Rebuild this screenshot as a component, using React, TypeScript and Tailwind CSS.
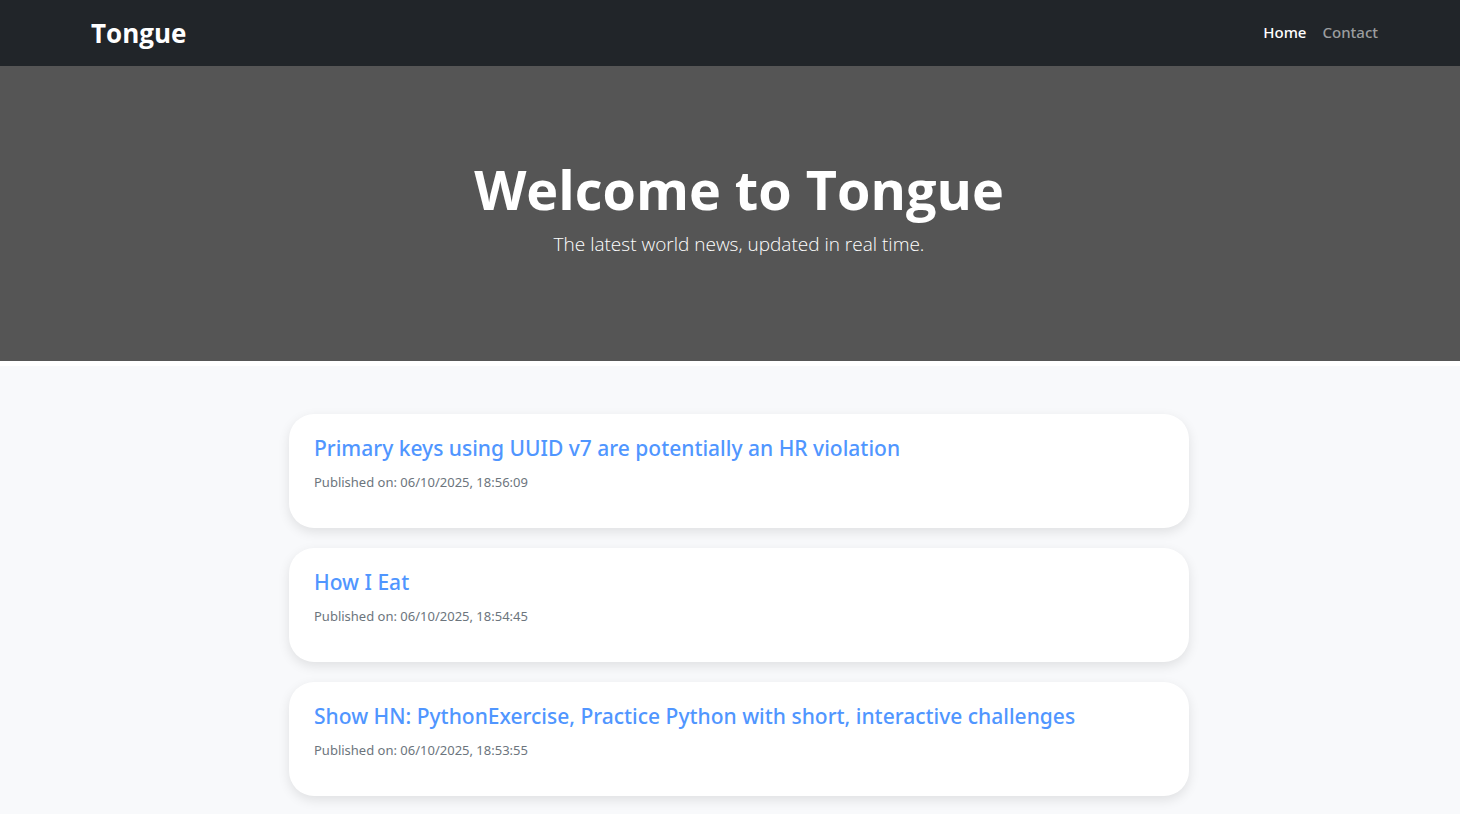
const articles = [
  { title: "Primary keys using UUID v7 are potentially an HR violation", date: "06/10/2025, 18:56:09" },
  { title: "How I Eat", date: "06/10/2025, 18:54:45" },
  { title: "Show HN: PythonExercise, Practice Python with short, interactive challenges", date: "06/10/2025, 18:53:55" },
];

export default function App() {
  return (
    <div className="min-h-screen bg-[#f8f9fb] font-['Segoe_UI','Open_Sans','Noto_Sans',sans-serif] text-[#212529]">
      <nav className="bg-[#212529]">
        <div className="mx-auto flex h-[66px] max-w-[1320px] items-center justify-between pr-3 pl-[21px]">
          <a href="#" className="text-[26px] font-bold text-white">Tongue</a>
          <div className="flex gap-4 pb-0.5 font-['Segoe_UI','Noto_Sans',sans-serif] text-[15px]">
            <a href="#" aria-current="page" className="font-medium text-white">Home</a>
            <a href="#contact" className="font-medium text-[#9b9d9f]">Contact</a>
          </div>
        </div>
      </nav>
      <header className="border-b-[5px] border-white bg-[#555555] pt-[90px] pb-[103px] pl-[18px] text-center text-white">
        <h1 className="text-[54px] leading-[66px] font-bold">Welcome to Tongue</h1>
        <p className="mt-2 text-[19px] leading-7 font-light">The latest world news, updated in real time.</p>
      </header>
      <main className="pt-12 pl-[18px]">
        <div className="mx-auto flex max-w-[900px] flex-col gap-5 font-['Segoe_UI','Noto_Sans',sans-serif]">
          {articles.map((article) => (
            <article key={article.title} className="rounded-[25px] bg-white px-[25px] pt-5 pb-[34px] shadow-[0_4px_12px_rgba(0,0,0,0.1)]">
              <h2 className="text-[21px] leading-7 font-medium">
                <a href="#" className="text-[#5096ff]">{article.title}</a>
              </h2>
              <p className="mt-2 text-[13px] leading-6 text-[#6c757d]">Published on: {article.date}</p>
            </article>
          ))}
        </div>
      </main>
    </div>
  );
}
